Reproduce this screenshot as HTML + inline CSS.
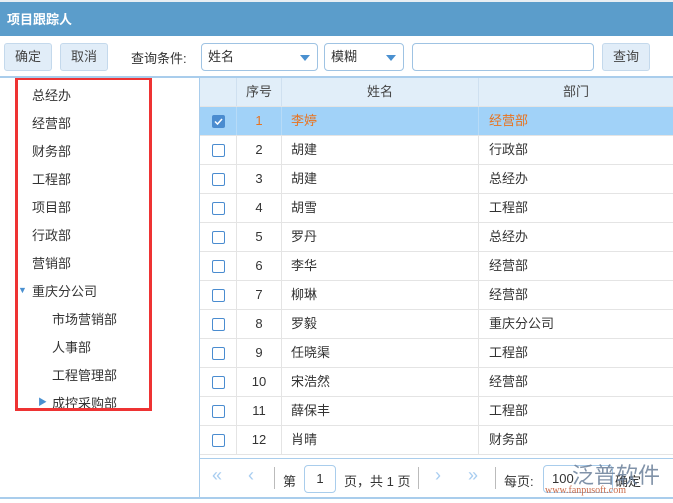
<!DOCTYPE html>
<html><head><meta charset="utf-8"><style>
*{box-sizing:border-box;margin:0;padding:0}
body{width:673px;height:503px;overflow:hidden;background:#fff;font-family:"Liberation Sans","Noto Sans CJK SC",sans-serif;font-size:13px;color:#333;position:relative}
.title{position:absolute;left:0;top:0;width:673px;height:36px;background:#5b9dcb;color:#fff;font-weight:bold;font-size:13px;line-height:36px;padding-left:7px;border-top:2px solid #e8eef3}
.bar{position:absolute;top:36px;left:0;width:673px;height:40px;background:#fff}
.btn{position:absolute;top:7px;height:28px;background:#e1edf8;border:1px solid #c4d9ec;border-radius:3px;line-height:26px;text-align:center;color:#444}
.inp{position:absolute;top:7px;height:28px;border:1px solid #9fc3e3;border-radius:4px;background:#fff;line-height:26px;padding-left:6px}
.sel:after{content:"";position:absolute;right:7px;top:11px;border:5px solid transparent;border-top:6px solid #4a90d0;border-bottom:0}
.main{position:absolute;top:76px;left:0;width:673px;height:423px;border-top:2px solid #a9cdec;border-bottom:2px solid #a9cdec;overflow:hidden}
.tree{position:absolute;left:0;top:0;width:200px;height:421px;border-right:1px solid #a9cdec}
.tree div{position:absolute;font-size:13px;color:#333}
.red{position:absolute;left:15px;top:-1px;width:137px;height:334px;border:3px solid #ee3333}
.grid{position:absolute;left:200px;top:0;width:473px;height:421px}
.row{position:absolute;left:0;width:473px;height:29px;border-bottom:1px solid #e4e4e4;line-height:28px}
.row span{position:absolute;top:0;height:28px}
.c0{left:0;width:37px;border-right:1px solid #e4e4e4}
.c1{left:37px;width:45px;text-align:center;border-right:1px solid #e4e4e4}
.c2{left:82px;width:197px;padding-left:9px;border-right:1px solid #e4e4e4}
.c3{left:279px;padding-left:10px}
.cb{position:absolute;left:12px;top:8px;width:13px;height:13px;border:1px solid #4a8cd0;background:#fff;border-radius:2px}
.hd{background:#e1eef9;top:0;height:29px;color:#444}
.hd span{border-color:#cfe0f0}
.pager{position:absolute;left:0;top:380px;width:473px;height:41px;border-top:1px solid #a9cdec;background:#fff;color:#333}
.pager span{position:absolute;top:12px;white-space:nowrap}
</style></head><body>
<div class="title">项目跟踪人</div>
<div class="bar">
<div class="btn" style="left:4px;width:48px">确定</div>
<div class="btn" style="left:60px;width:48px">取消</div>
<span style="position:absolute;left:131px;top:12px">查询条件:</span>
<div class="inp sel" style="left:201px;width:117px">姓名</div>
<div class="inp sel" style="left:324px;width:80px">模糊</div>
<div class="inp" style="left:412px;width:182px"></div>
<div class="btn" style="left:602px;width:48px">查询</div>
</div>
<div class="main">
<div class="tree">
<div style="left:32px;top:7px">总经办</div>
<div style="left:32px;top:35px">经营部</div>
<div style="left:32px;top:63px">财务部</div>
<div style="left:32px;top:91px">工程部</div>
<div style="left:32px;top:119px">项目部</div>
<div style="left:32px;top:147px">行政部</div>
<div style="left:32px;top:175px">营销部</div>
<div style="left:18px;color:#4a90d0;font-size:9px;top:207px">▼</div>
<div style="left:32px;top:203px">重庆分公司</div>
<div style="left:52px;top:231px">市场营销部</div>
<div style="left:52px;top:259px">人事部</div>
<div style="left:52px;top:287px">工程管理部</div>
<div style="left:38px;top:317px;color:#4a90d0;font-size:9px">▶</div>
<div style="left:52px;top:315px">成控采购部</div>
<div class="red"></div>
</div>
<div class="grid">
<div class="row hd"><span class="c0"></span><span class="c1">序号</span><span class="c2" style="text-align:center;padding:0">姓名</span><span class="c3" style="width:194px;text-align:center;padding:0">部门</span></div>
<div class="row" style="top:29px;background:#a1d2f8;color:#e8731f"><span class="c0" style="border-color:#b7dbf7"><i class="cb" style="background:#4a8cd0"><svg width="11" height="11" viewBox="0 0 11 11" style="position:absolute;left:0;top:0"><path d="M2 5.5l2.5 2.5 4.5-5" stroke="#fff" stroke-width="1.5" fill="none"/></svg></i></span><span class="c1" style="border-color:#b7dbf7">1</span><span class="c2" style="border-color:#b7dbf7">李婷</span><span class="c3">经营部</span></div>
<div class="row" style="top:58px"><span class="c0"><i class="cb"></i></span><span class="c1">2</span><span class="c2">胡建</span><span class="c3">行政部</span></div>
<div class="row" style="top:87px"><span class="c0"><i class="cb"></i></span><span class="c1">3</span><span class="c2">胡建</span><span class="c3">总经办</span></div>
<div class="row" style="top:116px"><span class="c0"><i class="cb"></i></span><span class="c1">4</span><span class="c2">胡雪</span><span class="c3">工程部</span></div>
<div class="row" style="top:145px"><span class="c0"><i class="cb"></i></span><span class="c1">5</span><span class="c2">罗丹</span><span class="c3">总经办</span></div>
<div class="row" style="top:174px"><span class="c0"><i class="cb"></i></span><span class="c1">6</span><span class="c2">李华</span><span class="c3">经营部</span></div>
<div class="row" style="top:203px"><span class="c0"><i class="cb"></i></span><span class="c1">7</span><span class="c2">柳琳</span><span class="c3">经营部</span></div>
<div class="row" style="top:232px"><span class="c0"><i class="cb"></i></span><span class="c1">8</span><span class="c2">罗毅</span><span class="c3">重庆分公司</span></div>
<div class="row" style="top:261px"><span class="c0"><i class="cb"></i></span><span class="c1">9</span><span class="c2">任晓渠</span><span class="c3">工程部</span></div>
<div class="row" style="top:290px"><span class="c0"><i class="cb"></i></span><span class="c1">10</span><span class="c2">宋浩然</span><span class="c3">经营部</span></div>
<div class="row" style="top:319px"><span class="c0"><i class="cb"></i></span><span class="c1">11</span><span class="c2">薛保丰</span><span class="c3">工程部</span></div>
<div class="row" style="top:348px"><span class="c0"><i class="cb"></i></span><span class="c1">12</span><span class="c2">肖晴</span><span class="c3">财务部</span></div>
<div class="pager">
<span style="left:12px;color:#a8cdf0;font-size:18px;top:6px">«</span>
<span style="left:48px;color:#a8cdf0;font-size:18px;top:6px">‹</span>
<span style="left:74px;top:8px;height:22px;border-left:1px solid #bbb"></span>
<span style="left:83px">第</span>
<div style="position:absolute;left:104px;top:6px;width:32px;height:28px;border:1px solid #a9cdec;border-radius:4px;text-align:center;line-height:26px">1</div>
<span style="left:144px">页，共 1 页</span>
<span style="left:218px;top:8px;height:22px;border-left:1px solid #bbb"></span>
<span style="left:235px;color:#a8cdf0;font-size:18px;top:6px">›</span>
<span style="left:268px;color:#a8cdf0;font-size:18px;top:6px">»</span>
<span style="left:295px;top:8px;height:22px;border-left:1px solid #bbb"></span>
<span style="left:304px">每页:</span>
<div style="position:absolute;left:343px;top:6px;width:70px;height:28px;border:1px solid #a9cdec;border-radius:4px;line-height:26px;padding-left:8px">100</div>
<span style="left:415px">确定</span>
<span style="left:372px;top:-1px;font-size:22px;color:#6b7f99;opacity:.85">泛普软件</span>
<span style="left:345px;top:26px;font-size:10px;color:#c96b4a;font-family:'Liberation Serif',serif">www.fanpusoft.com</span>
</div>
</div>
</div>
</body></html>
